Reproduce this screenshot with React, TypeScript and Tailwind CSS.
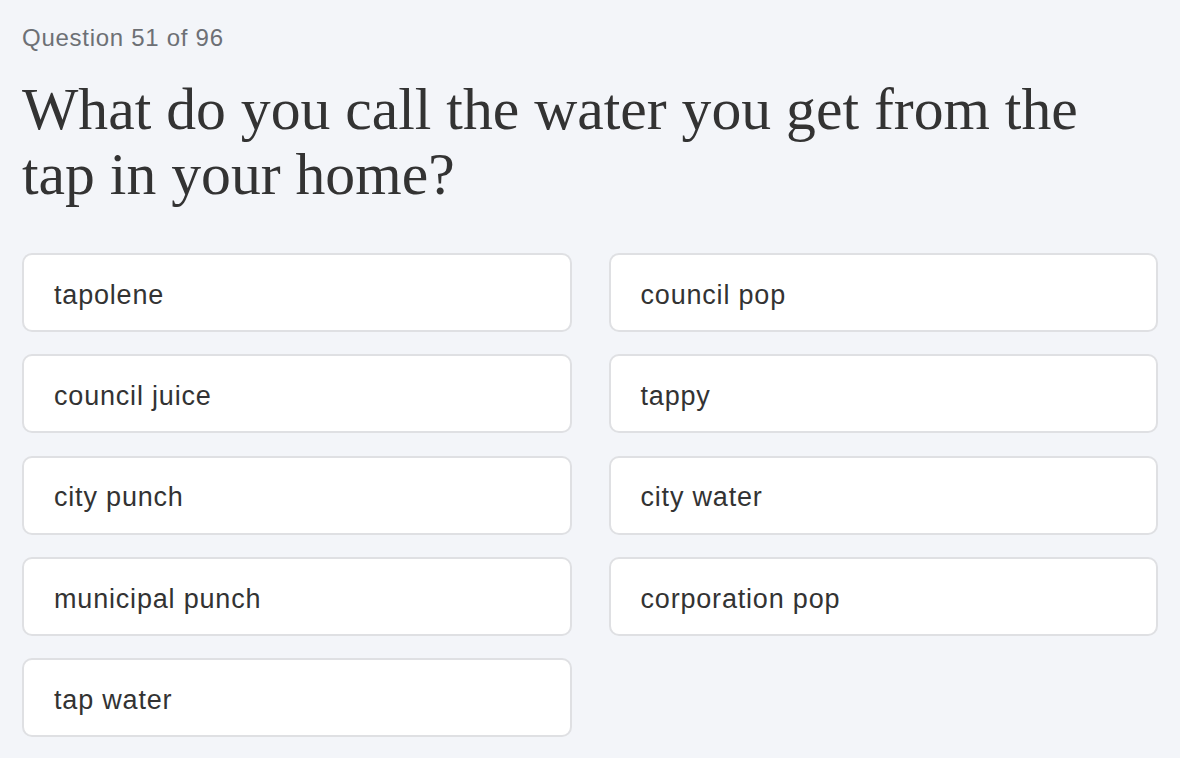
const OPTIONS = [
  'tapolene',
  'council pop',
  'council juice',
  'tappy',
  'city punch',
  'city water',
  'municipal punch',
  'corporation pop',
  'tap water',
];

const sans = { fontFamily: '"Liberation Sans", Arial, sans-serif' };

export default function App() {
  return (
    <div className="min-h-screen bg-[#f3f5f9] px-[22px] pt-[24px] pb-10">
      <p
        className="text-[24px] leading-[28px] tracking-[0.03em] text-[#6d7075] font-['Liberation_Sans',Arial,sans-serif]"
      >
        Question 51 of 96
      </p>

      <h1 className="mt-[25px] text-[59.7px] leading-[65px] text-[#333333] font-['Liberation_Serif','Times_New_Roman',serif]">
        What do you call the water you get from the tap in your home?
      </h1>

      <div className="mt-[46px] grid grid-cols-2 gap-x-[37px] gap-y-[22.25px]" style={sans}>
        {OPTIONS.map((option) => (
          <button
            key={option}
            className="flex h-[79px] items-center rounded-[10px] border-2 border-[#dfe0e3] bg-white pl-[30px] pt-[5px] text-left text-[27px] tracking-[0.03em] text-[#333333]"
          >
            {option}
          </button>
        ))}
      </div>
    </div>
  );
}
